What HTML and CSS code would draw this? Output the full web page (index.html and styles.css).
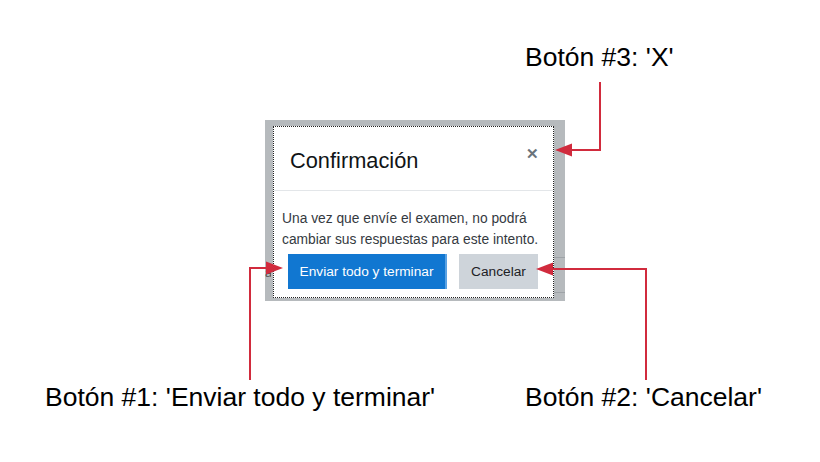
FILE: index.html
```html
<!DOCTYPE html>
<html lang="es">
<head>
<meta charset="utf-8">
<title>Confirmación</title>
<link rel="stylesheet" href="styles.css">
</head>
<body>
<div class="stage">
  <div class="frame">
    <div class="bg-lines"><span class="ln l1"></span><span class="ln l2"></span><span class="frag">a</span></div>
    <div class="modal">
      <div class="modal-header">
        <h5 class="modal-title">Confirmación</h5>
        <span class="close">&#x2715;</span>
      </div>
      <div class="modal-body">Una vez que envíe el examen, no podrá cambiar sus respuestas para este intento.</div>
      <div class="modal-footer">
        <span class="btn btn-primary">Enviar todo y terminar</span>
        <span class="btn btn-secondary">Cancelar</span>
      </div>
    </div>
  </div>
  <svg class="arrows" width="820" height="462" viewBox="0 0 820 462">
    <g fill="none" stroke="#d12b3d" stroke-width="2">
      <polyline points="600,82 600,150 566,150"/>
      <polyline points="250,380 250,268 270,268"/>
      <polyline points="646,380 646,269 550,269"/>
    </g>
    <g fill="#d12b3d">
      <polygon points="555,150 572,143.5 572,156.5"/>
      <polygon points="283,268 266,261.5 266,274.5"/>
      <polygon points="536,269 553,262.5 553,275.5"/>
    </g>
  </svg>
  <div class="label label-3">Botón #3: 'X'</div>
  <div class="label label-1">Botón #1: 'Enviar todo y terminar'</div>
  <div class="label label-2">Botón #2: 'Cancelar'</div>
</div>
</body>
</html>
```
FILE: styles.css
```css
html, body {
  margin: 0;
  padding: 0;
  background: #ffffff;
}
.stage {
  position: relative;
  width: 820px;
  height: 462px;
  overflow: hidden;
  font-family: "Liberation Sans", Arial, sans-serif;
}
.frame {
  position: absolute;
  left: 265px;
  top: 120px;
  width: 300px;
  height: 181px;
  box-sizing: border-box;
  padding: 6px 12px 3px 8px;
  background: #b6babd;
  display: flex;
}
.bg-lines .ln {
  position: absolute;
  right: 0;
  width: 14px;
  height: 1px;
  background: #9ea3a7;
}
.bg-lines .l1 { top: 137px; }
.bg-lines .l2 { top: 172px; }
.bg-lines .frag {
  position: absolute;
  left: 0;
  top: 145px;
  font: 13px "Liberation Sans", sans-serif;
  color: #555;
  width: 6px;
  overflow: hidden;
}
.modal {
  position: relative;
  flex: 1;
  background: #ffffff;
  border: 1px dotted #222;
  display: flex;
  flex-direction: column;
  font-family: "Liberation Sans", Arial, sans-serif;
}
.modal-header {
  height: 64px;
  box-sizing: border-box;
  border-bottom: 1px solid #e3e6e9;
  display: flex;
  align-items: center;
  justify-content: space-between;
  padding: 4px 14px 0 16px;
}
.modal-title {
  margin: 0;
  font-size: 21.8px;
  font-weight: 400;
  color: #111416;
}
.close {
  font-size: 14.5px;
  font-weight: 700;
  color: #6a737b;
  margin-top: -14px;
  margin-right: 0;
}
.modal-body {
  padding: 17px 6px 0 8px;
  font-size: 13.8px;
  line-height: 21px;
  color: #353a3f;
}
.modal-footer {
  display: flex;
  gap: 12px;
  padding: 4px 15px 0 14px;
}
.btn {
  height: 35px;
  display: flex;
  align-items: center;
  justify-content: center;
  font-size: 13.7px;
  box-sizing: border-box;
}
.btn-primary {
  width: 159px;
  background: #1177d1;
  color: #ffffff;
  border-right: 2px solid #5aa2e3;
}
.btn-secondary {
  width: 79px;
  background: #ced4da;
  color: #1d2125;
}
.arrows {
  position: absolute;
  left: 0;
  top: 0;
}
.label {
  position: absolute;
  font-size: 26.5px;
  color: #000;
  white-space: nowrap;
  line-height: 30px;
}
.label-3 { left: 525px; top: 42px; }
.label-1 { left: 45px; top: 382px; }
.label-2 { left: 525px; top: 382px; }
```
